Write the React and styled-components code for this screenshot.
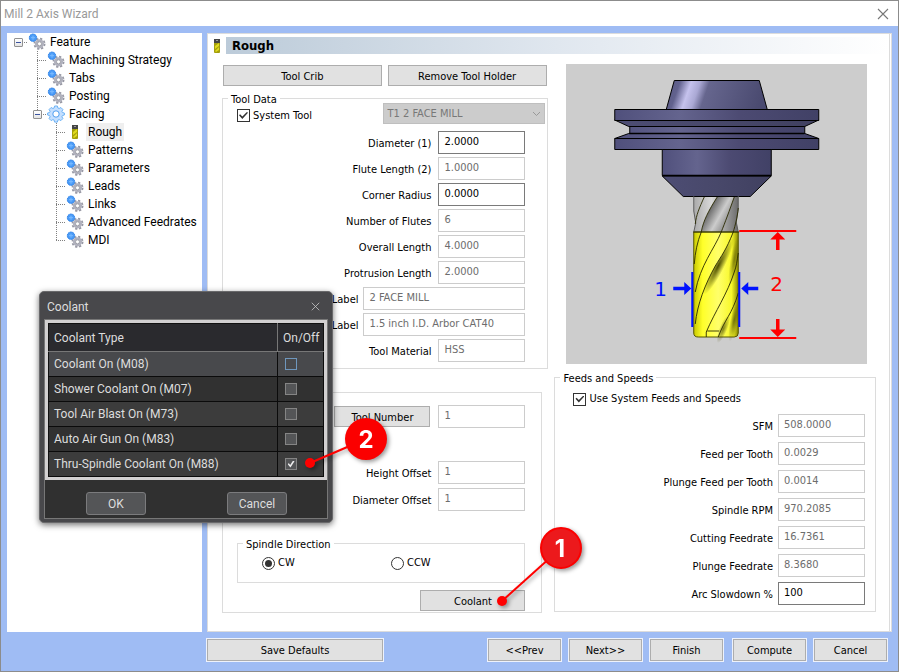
import React, { useState } from 'react';
import styled, { createGlobalStyle, css } from 'styled-components';

const uiFont = "'DejaVu Sans Condensed', 'DejaVu Sans', Tahoma, sans-serif";
const treeFont = "Roboto, 'Segoe UI', sans-serif";

const GlobalStyle = createGlobalStyle`
  * {
    box-sizing: border-box;
  }

  body {
    margin: 0;
    background: #9fbcf4;
    color: #000;
    font: 11px/14px ${uiFont};
  }

  button,
  input,
  select {
    font: inherit;
    color: inherit;
    margin: 0;
  }
`;

const Window = styled.div`
  position: relative;
  display: flex;
  flex-direction: column;
  min-height: 100vh;
  border: 1px solid #8c8c8c;
  background: #9fbcf4;
`;

const TitleBar = styled.header`
  display: flex;
  align-items: center;
  justify-content: space-between;
  height: 25px;
  padding: 0 9px 0 3px;
  background: #fff;
`;

const Title = styled.h1`
  margin: 0;
  color: #999;
  font: 400 12px/18px ${treeFont};
`;

const CloseButton = styled.button`
  display: flex;
  padding: 0;
  border: 0;
  background: none;
  color: ${({ $light }) => ($light ? '#c4c4c4' : '#777')};
`;

const Body = styled.div`
  display: flex;
  flex: 1;
  gap: 5px;
  padding: 7px 6px 0;
`;

const TreePanel = styled.nav`
  flex: 0 0 195px;
  padding-left: 2px;
  background: #fff;
`;

const TreeRow = styled.div`
  display: flex;
  align-items: center;
  height: 18px;
`;

const dots = (dir) =>
  `repeating-linear-gradient(${dir}, #808080 0 1px, transparent 1px 2px)`;

const Guide = styled.span`
  display: flex;
  align-items: center;
  justify-content: center;
  width: 19px;
  height: 18px;
  background-repeat: no-repeat;
  ${({ $kind }) =>
    $kind === 'root' &&
    css`
      background-image: ${dots('to right')};
      background-size: 10px 1px;
      background-position: 9px 9px;
    `}
  ${({ $kind }) =>
    ($kind === 'branch' || $kind === 'last') &&
    css`
      background-image: ${dots('to right')}, ${dots('to bottom')};
      background-size: 10px 1px, 1px ${$kind === 'last' ? '10px' : '100%'};
      background-position: 9px 9px, 9px 0;
    `}
`;

const Expander = styled.button`
  display: flex;
  align-items: center;
  justify-content: center;
  width: 9px;
  height: 9px;
  padding: 0;
  border: 1px solid #919191;
  border-radius: 1px;
  background: linear-gradient(#fff, #e4e4e4);

  &::after {
    content: '';
    width: 5px;
    height: 1px;
    background: #3b54a0;
  }
`;

const TreeIcon = styled.span`
  display: flex;
  width: 20px;
  height: 18px;
`;

const TreeLabel = styled.button`
  height: 18px;
  padding: 0 2px;
  border: 0;
  background: ${({ $selected }) => ($selected ? '#efefef' : 'none')};
  font: 12px/18px ${treeFont};
  white-space: nowrap;
`;

const Panel = styled.main`
  flex: 1;
  min-width: 0;
  padding: 3px 0 18px 3px;
  border: 1px solid #dcdcdc;
  border-right: 3px double #dcdcdc;
  background: #fff;
`;

const PanelHeader = styled.div`
  display: flex;
  align-items: center;
  height: 17px;
`;

const HeaderIcon = styled.span`
  display: flex;
  justify-content: flex-end;
  width: 15px;

  svg {
    flex: none;
  }
`;

const PanelTitle = styled.h2`
  flex: 1;
  margin: 0;
  padding-left: 6px;
  background: linear-gradient(to right, #bccbd9, #e0e7ef 50%, #fff);
  font: 700 13px/17px ${uiFont};
`;

const Columns = styled.div`
  display: grid;
  grid-template-columns: minmax(0, 327fr) minmax(0, 322fr);
  gap: 6px;
  padding: 11px 13px 0 11px;
`;

const Column = styled.div`
  display: flex;
  flex-direction: column;
`;

const PushButton = styled.button`
  height: 21px;
  padding: 2px 4px 0;
  border: 1px solid #adadad;
  background: #e1e1e1;
  line-height: 17px;
  white-space: nowrap;
`;

const TopButtons = styled.div`
  display: flex;
  gap: 6px;
  padding: 0 2px 0 1px;

  ${PushButton} {
    flex: 1;
  }
`;

const Group = styled.fieldset`
  min-width: 0;
  margin: 0;
  padding: 0;
  border: 1px solid #dcdcdc;
`;

const Legend = styled.legend`
  height: 10px;
  margin-left: 5px;
  padding: 0 3px;
  line-height: 13px;
`;

const ToolDataGroup = styled(Group)`
  margin-top: 7px;
  padding-bottom: 6px;
`;

const CheckLabel = styled.label`
  display: flex;
  align-items: center;
  gap: 3px;
`;

const ToolRow = styled.div`
  display: flex;
  align-items: center;
  justify-content: space-between;
  padding: 0 2px 0 14px;

  ${CheckLabel} {
    padding-top: 4px;
  }
`;

const CheckBox = styled.input.attrs({ type: 'checkbox' })`
  appearance: none;
  display: grid;
  place-items: center;
  width: 13px;
  height: 13px;
  border: 1px solid #333;
  background: #fff;

  &:checked::after {
    content: '';
    width: 9px;
    height: 7px;
    background: #333;
    clip-path: polygon(0 45%, 12% 32%, 37% 65%, 88% 0, 100% 12%, 37% 100%);
  }
`;

const SelectWrap = styled.span`
  display: grid;
  flex: 0 0 162px;
  align-items: center;

  > * {
    grid-area: 1 / 1;
  }

  svg {
    justify-self: end;
    margin-right: 4px;
    pointer-events: none;
  }
`;

const Select = styled.select`
  appearance: none;
  width: 100%;
  height: 21px;
  padding: 1px 3px 0;
  border: 1px solid #bfbfbf;
  border-radius: 0;
  background: #ccc;
  color: #787878;
  opacity: 1;
`;

const Fields = styled.div`
  display: flex;
  flex-direction: column;
  gap: ${({ $gap }) => $gap}px;
`;

const ToolFields = styled(Fields)`
  padding: 7px 22px 0 14px;
`;

const FieldRow = styled.div`
  display: grid;
  grid-template-columns: minmax(0, 1fr) ${({ $wide }) => ($wide ? 162 : 87)}px;
  gap: ${({ $wide }) => ($wide ? 5 : 7)}px;
  align-items: center;
`;

const FieldLabel = styled.label`
  padding-top: 2px;
  text-align: right;
  white-space: nowrap;
`;

const TextBox = styled.input`
  width: 100%;
  height: 23px;
  padding: 0 5px 3px;
  border: 1px solid #7a7a7a;
  border-radius: 0;
  background: #fff;

  &:disabled {
    border-color: #ccc;
    color: #6d6d6d;
  }
`;

const OffsetGroup = styled(Group)`
  display: flex;
  flex-direction: column;
  margin: 23px 6px 0 0;
  padding: 12px 16px 1px 14px;
`;

const NumberRow = styled.div`
  display: flex;
  align-items: center;
  justify-content: flex-end;
  gap: 8px;
  margin-bottom: 33px;

  ${PushButton} {
    flex: 0 0 96px;
  }

  ${TextBox} {
    flex: 0 0 87px;
  }
`;

const SpindleGroup = styled(Group)`
  margin-top: 27px;
`;

const RadioRow = styled.div`
  display: grid;
  grid-template-columns: 129px 1fr;
  padding: 8px 0 12px 24px;
`;

const Radio = styled.input.attrs({ type: 'radio' })`
  appearance: none;
  display: grid;
  place-items: center;
  width: 13px;
  height: 13px;
  border: 1px solid #333;
  border-radius: 50%;

  &:checked::after {
    content: '';
    width: 7px;
    height: 7px;
    border-radius: 50%;
    background: #333;
  }
`;

const CoolantAnchor = styled.div`
  position: relative;
  align-self: flex-end;
  margin-top: 7px;

  ${PushButton} {
    width: 105px;
  }
`;

const Callout = styled.svg`
  position: absolute;
  z-index: 3;
  left: ${({ $left }) => $left}px;
  top: ${({ $top }) => $top}px;
  overflow: visible;
  pointer-events: none;
  filter: drop-shadow(2px 2px 2px rgba(0, 0, 0, 0.4));

  text {
    fill: #fff;
    font: 700 24px Inter, sans-serif;
    text-anchor: middle;
  }
`;

const Preview = styled.div`
  margin: -1px 9px 8px 12px;
  background: #cdcdcd;

  svg {
    display: block;
    width: 100%;
    max-height: 300px;
  }

  text {
    font: 20px 'DejaVu Sans', sans-serif;
  }
`;

const FeedsGroup = styled(Group)`
  padding-bottom: 6px;

  > ${CheckLabel} {
    padding: 10px 0 8px 18px;
  }
`;

const FeedFields = styled(Fields)`
  padding: 0 10px 0 14px;

  ${FieldRow} {
    gap: 5px;
  }
`;

const Footer = styled.footer`
  display: flex;
  justify-content: space-between;
  padding: 7px 11px 10px 206px;

  ${PushButton} {
    width: 73px;
    height: 22px;
    padding-top: 0;
    box-shadow: 0 0 0 1px #eef2fb;
  }

  > ${PushButton} {
    width: 176px;
  }
`;

const FooterGroup = styled.div`
  display: flex;
  gap: 8px;
`;

const FooterActions = styled(FooterGroup)`
  gap: 10px;
`;

const Dialog = styled.section`
  position: absolute;
  z-index: 2;
  left: 38px;
  top: 290px;
  width: 294px;
  padding: 0 4px 3px;
  border: 1px solid #69696b;
  border-radius: 5px;
  background: #48484b;
  color: #ddd;
  font: 12px/16px ${treeFont};
  box-shadow: 0 2px 6px rgba(0, 0, 0, 0.55);
`;

const DialogTitle = styled.div`
  display: flex;
  align-items: center;
  justify-content: space-between;
  height: 27px;
  padding: 2px 8px 0 3px;
`;

const DialogBody = styled.div`
  border: 1px solid #777;
  background: #303030;
`;

const TableFrame = styled.div`
  border: 3px solid #d2d0d1;
  background: #303030;
`;

const CoolantTable = styled.table`
  width: 100%;
  border-collapse: collapse;
  table-layout: fixed;
  border: 1px solid #111;

  th {
    height: 28px;
    padding: 0 0 0 5px;
    border-right: 1px solid #777;
    border-bottom: 1px solid #777;
    background: #2a2a2e;
    font-weight: 400;
    text-align: left;
  }

  th:last-child {
    width: 46px;
    border-right: 0;
  }

  td {
    height: 25px;
    padding: 0 5px;
    border: 1px solid #0b0b0b;
    border-width: 0 1px 1px 0;
  }
`;

const CoolantRow = styled.tr`
  background: ${({ $active, $odd }) =>
    $active ? '#48494c' : $odd ? '#313131' : '#3c3c3c'};
`;

const DarkCheck = styled(CheckBox)`
  width: 12px;
  height: 12px;
  margin-left: 2px;
  border-color: ${({ $active }) => ($active ? '#6f97bd' : '#858585')};
  background: ${({ $active }) => ($active ? '#48494c' : '#545557')};

  &:checked::after {
    width: 7px;
    height: 7px;
    background: #eee;
    clip-path: polygon(0 50%, 20% 40%, 38% 65%, 80% 0, 100% 10%, 42% 100%);
  }
`;

const DialogButtons = styled.div`
  display: flex;
  justify-content: space-between;
  padding: 12px 40px 3px 41px;

  button {
    width: 60px;
    height: 23px;
    padding: 1px 0 0;
    border: 1px solid #7b7b7d;
    border-radius: 3px;
    background: #545557;
  }
`;

const Gears = () => (
  <svg width="18" height="18" viewBox="0 0 18 18">
    <circle cx="11.500" cy="10.800" r="5.100" fill="none" stroke="#9697a3" strokeWidth="1.800" strokeDasharray="2.200 1.800" />
    <circle cx="11.500" cy="10.800" r="3.300" fill="none" stroke="#b1b2be" strokeWidth="2.600" />
    <circle cx="11.500" cy="10.800" r="2" fill="#fff" stroke="#85868f" strokeWidth="0.700" />
    <circle cx="5" cy="4.700" r="3.700" fill="#4a9bf7" stroke="#2c7fe6" strokeWidth="1" strokeDasharray="1.600 0.700" />
    <path d="M3 4.700h4M5 2.700v4" stroke="#7dbcff" />
  </svg>
);

const FacingGear = () => (
  <svg width="18" height="18" viewBox="0 0 18 18">
    <path
      d="M7.600 1h2.800l.5 2 1.200.5 1.800-1 2 2-1 1.800.5 1.200 2 .5v2l-2 .6-.5 1.200 1 1.800-2 2-1.800-1-1.200.5-.5 2H7.600l-.5-2-1.200-.5-1.800 1-2-2 1-1.800-.5-1.200-2-.6V8l2-.5.5-1.200-1-1.800 2-2 1.800 1 1.200-.5z"
      fill="#c4dfff"
      stroke="#6db3f5"
    />
    <circle cx="9" cy="9" r="3.200" fill="#fff" stroke="#4d9df0" />
  </svg>
);

const MillIcon = () => (
  <svg width="18" height="18" viewBox="0 0 18 18">
    <rect x="6" y="2" width="6" height="14" rx="1" fill="#a39e0c" />
    <rect x="6" y="2" width="6" height="4" fill="#444" />
    <path d="M7 9l4-3v3L7 12zM7 14l4-4v3l-3 2z" fill="#e0da1c" />
    <path d="M8 3h2v1H8z" fill="#999" />
  </svg>
);

const Cross = ({ size }) => (
  <svg width={size} height={size} viewBox="0 0 12 12">
    <path d="M1 1l10 10M11 1L1 11" stroke="currentColor" strokeWidth="1.100" />
  </svg>
);

const MillDrawing = () => (
  <svg viewBox="0 0 300 300" role="img" aria-label="Tool preview">
    <defs>
      <linearGradient id="steel">
        <stop offset="0" stopColor="#50507c" />
        <stop offset="0.32" stopColor="#64648e" />
        <stop offset="0.62" stopColor="#4c4a72" />
        <stop offset="1" stopColor="#414166" />
      </linearGradient>
      <linearGradient id="cone" x2="1" y2="0.1">
        <stop offset="0" stopColor="#56567f" />
        <stop offset="0.14" stopColor="#62628e" />
        <stop offset="0.25" stopColor="#c5c2ed" />
        <stop offset="0.34" stopColor="#aaa8d4" />
        <stop offset="0.43" stopColor="#66668e" />
        <stop offset="1" stopColor="#4a4a70" />
      </linearGradient>
      <linearGradient id="taper">
        <stop offset="0" stopColor="#4d4d74" />
        <stop offset="0.5" stopColor="#48486a" />
        <stop offset="1" stopColor="#404060" />
      </linearGradient>
      <linearGradient id="shank">
        <stop offset="0" stopColor="#aaa" />
        <stop offset="0.4" stopColor="#d9d9d9" />
        <stop offset="1" stopColor="#6b6b6b" />
      </linearGradient>
      <linearGradient id="flute" x2="1" y2="0.6">
        <stop offset="0.2" stopColor="#3a3a3a" />
        <stop offset="0.65" stopColor="#ccc" />
        <stop offset="1" stopColor="#777" />
      </linearGradient>
      <linearGradient id="cutter">
        <stop offset="0" stopColor="#c9c900" />
        <stop offset="0.2" stopColor="#ffff2a" />
        <stop offset="0.55" stopColor="#ffff6a" />
        <stop offset="0.85" stopColor="#f8f82a" />
        <stop offset="1" stopColor="#8a8a00" />
      </linearGradient>
      <radialGradient id="shade">
        <stop offset="0" stopColor="#4d4d00" />
        <stop offset="1" stopColor="#4d4d00" stopOpacity="0" />
      </radialGradient>
      <clipPath id="right-of-flute">
        <path d="M167 168C160 186 155 192 149 202 139 220 131 240 129 260v17h43V168z" />
      </clipPath>
    </defs>
    <g stroke="#000" strokeWidth="1">
      <path d="M108 16.500h85l8 29H100z" fill="url(#cone)" />
      <path d="M48.500 56l14 6.500h176l14-6.500z" fill="url(#taper)" />
      <path d="M62.500 69.500h176l14 5h-204z" fill="url(#steel)" />
      <path d="M48.500 45.500h204v11h-204zM63.500 62.500h175v7h-175zM48.500 74.500h204v11h-204z" fill="url(#steel)" />
      <path d="M96 85.500h109v26H96z" fill="url(#steel)" />
      <path d="M96 112h109l-21 20.500h-67z" fill="url(#taper)" />
    </g>
    <path d="M63 69.500h175M96 111.500h109" stroke="#000" strokeWidth="1.700" />
    <path d="M127.500 133h44.500v11l-2 13 2 11h-44.500l1.500-9-1.500-12z" fill="url(#shank)" />
    <path d="M151 133h17C163 147 159 158 155 168H135C137 157 142 147 151 133z" fill="url(#flute)" />
    <path d="M127.500 168H172v101q0 4-4 4h-36q-4.500 0-4.500-4z" fill="url(#cutter)" stroke="#555500" />
    <g clipPath="url(#right-of-flute)">
      <ellipse cx="152" cy="202" rx="6" ry="32" transform="rotate(27 152 202)" fill="url(#shade)" />
      <ellipse cx="168" cy="196" rx="4" ry="26" transform="rotate(10 168 196)" fill="url(#shade)" opacity="0.6" />
    </g>
    <ellipse cx="168" cy="256" rx="4" ry="22" transform="rotate(12 168 256)" fill="url(#shade)" opacity="0.7" />
    <ellipse cx="157" cy="265" rx="4" ry="15" transform="rotate(22 157 265)" fill="url(#shade)" opacity="0.7" />
    <g fill="none" stroke="#292900" strokeWidth="0.900">
      <path d="M127.500 132v15l2 12-2 9M172 132v13l-2 13 2 10" stroke="#555" />
      <path d="M138 133C133 144 130 151 129 160" />
      <path d="M151 133C142 147 137 157 135 168 131 178 129 188 128 200" />
      <path d="M168 133C163 147 159 158 155 168 148 185 134 201 129 228" />
      <path d="M172 144C171 154 169 161 167 168 160 186 155 192 149 202 139 220 131 240 129 260" />
      <path d="M172 189C171 196 170 203 168 208 161 230 149 247 140 268v5M172 229C166 250 158 256 152 273" />
      <path d="M141 267h12M127 168h46" />
    </g>
    <g stroke="#0012ff" strokeWidth="2">
      <path d="M126 208v55M173 208v55" />
      <path d="M107 224.500h12M181 224.500h11" strokeWidth="3.500" />
      <path d="M118 218v13l7-6.500zM182 218v13l-7-6.500z" fill="#0012ff" stroke="none" />
    </g>
    <g stroke="#f00" strokeWidth="2">
      <path d="M173 167h57M173 274h57" />
      <path d="M211.500 173v13M211.500 255v12" strokeWidth="3.500" />
      <path d="M204 175.500h15l-7.500-7.500zM204 265.500h15l-7.500 7.500z" fill="#f00" stroke="none" />
    </g>
    <text x="88" y="232" fill="#0012ff">1</text>
    <text x="204" y="227" fill="#f00">2</text>
  </svg>
);

const treeItems = [
  { label: 'Feature', guides: ['root'], open: true },
  { label: 'Machining Strategy', guides: ['', 'branch'] },
  { label: 'Tabs', guides: ['', 'branch'] },
  { label: 'Posting', guides: ['', 'branch'] },
  { label: 'Facing', guides: ['', 'last'], open: true, icon: FacingGear },
  { label: 'Rough', guides: ['', '', 'branch'], icon: MillIcon },
  { label: 'Patterns', guides: ['', '', 'branch'] },
  { label: 'Parameters', guides: ['', '', 'branch'] },
  { label: 'Leads', guides: ['', '', 'branch'] },
  { label: 'Links', guides: ['', '', 'branch'] },
  { label: 'Advanced Feedrates', guides: ['', '', 'branch'] },
  { label: 'MDI', guides: ['', '', 'last'] },
];

const toolFields = [
  { id: 'diameter', label: 'Diameter (1)', value: '2.0000', enabled: true },
  { id: 'flute-length', label: 'Flute Length (2)', value: '1.0000' },
  { id: 'corner', label: 'Corner Radius', value: '0.0000', enabled: true },
  { id: 'flutes', label: 'Number of Flutes', value: '6' },
  { id: 'overall', label: 'Overall Length', value: '4.0000' },
  { id: 'protrusion', label: 'Protrusion Length', value: '2.0000' },
  { id: 'tool-label', label: 'Label', value: '2 FACE MILL', wide: true },
  { id: 'holder-label', label: 'Label', value: '1.5 inch I.D. Arbor CAT40', wide: true },
  { id: 'material', label: 'Tool Material', value: 'HSS' },
];

const offsetFields = [
  { id: 'height-offset', label: 'Height Offset', value: '1' },
  { id: 'diameter-offset', label: 'Diameter Offset', value: '1' },
];

const feedFields = [
  { id: 'sfm', label: 'SFM', value: '508.0000' },
  { id: 'fpt', label: 'Feed per Tooth', value: '0.0029' },
  { id: 'plunge-fpt', label: 'Plunge Feed per Tooth', value: '0.0014' },
  { id: 'rpm', label: 'Spindle RPM', value: '970.2085' },
  { id: 'cutting', label: 'Cutting Feedrate', value: '16.7361' },
  { id: 'plunge', label: 'Plunge Feedrate', value: '8.3680' },
  { id: 'arc', label: 'Arc Slowdown %', value: '100', enabled: true },
];

const coolants = [
  'Coolant On (M08)',
  'Shower Coolant On (M07)',
  'Tool Air Blast On (M73)',
  'Auto Air Gun On (M83)',
  'Thru-Spindle Coolant On (M88)',
];

const Field = ({ id, label, value, wide, enabled }) => (
  <FieldRow $wide={wide}>
    <FieldLabel htmlFor={id}>{label}</FieldLabel>
    <TextBox id={id} defaultValue={value} disabled={!enabled} />
  </FieldRow>
);

const CoolantDialog = () => (
  <Dialog role="dialog" aria-labelledby="coolant-title">
    <DialogTitle>
      <span id="coolant-title">Coolant</span>
      <CloseButton $light aria-label="Close">
        <Cross size={9} />
      </CloseButton>
    </DialogTitle>
    <DialogBody>
      <TableFrame>
        <CoolantTable>
          <thead>
            <tr>
              <th>Coolant Type</th>
              <th>On/Off</th>
            </tr>
          </thead>
          <tbody>
            {coolants.map((name, i) => (
              <CoolantRow key={name} $active={i === 0} $odd={i % 2 === 1}>
                <td>
                  <label htmlFor={`coolant-${i}`}>{name}</label>
                </td>
                <td>
                  <DarkCheck id={`coolant-${i}`} $active={i === 0} defaultChecked={i === 4} />
                </td>
              </CoolantRow>
            ))}
          </tbody>
        </CoolantTable>
      </TableFrame>
      <DialogButtons>
        <button>OK</button>
        <button>Cancel</button>
      </DialogButtons>
    </DialogBody>
    <Callout $left={265} $top={126} width="84" height="50">
      <path d="M5 45L61 21" stroke="#f00" strokeWidth="2" />
      <circle cx="5" cy="45" r="5" fill="#f00" />
      <circle cx="61" cy="21" r="21" fill="#fb0000" />
      <text x="61" y="30">2</text>
    </Callout>
  </Dialog>
);

export const App = () => {
  const [selected, setSelected] = useState('Rough');

  return (
    <>
      <GlobalStyle />
      <Window>
        <TitleBar>
          <Title>Mill 2 Axis Wizard</Title>
          <CloseButton aria-label="Close window">
            <Cross size={12} />
          </CloseButton>
        </TitleBar>
        <Body>
          <TreePanel>
            {treeItems.map(({ label, guides, open, icon: Icon = Gears }) => (
              <TreeRow key={label}>
                {guides.map((kind, i) => (
                  <Guide key={i} $kind={kind}>
                    {open && i === guides.length - 1 && <Expander aria-label={`Collapse ${label}`} />}
                  </Guide>
                ))}
                <TreeIcon>
                  <Icon />
                </TreeIcon>
                <TreeLabel $selected={label === selected} onClick={() => setSelected(label)}>
                  {label}
                </TreeLabel>
              </TreeRow>
            ))}
          </TreePanel>
          <Panel>
            <PanelHeader>
              <HeaderIcon>
                <MillIcon />
              </HeaderIcon>
              <PanelTitle>Rough</PanelTitle>
            </PanelHeader>
            <Columns>
              <Column>
                <TopButtons>
                  <PushButton>Tool Crib</PushButton>
                  <PushButton>Remove Tool Holder</PushButton>
                </TopButtons>
                <ToolDataGroup>
                  <Legend>Tool Data</Legend>
                  <ToolRow>
                    <CheckLabel>
                      <CheckBox defaultChecked />
                      System Tool
                    </CheckLabel>
                    <SelectWrap>
                      <Select disabled aria-label="Tool">
                        <option>T1 2 FACE MILL</option>
                      </Select>
                      <svg width="9" height="6" viewBox="0 0 9 6">
                        <path d="M1 1l3.500 3.500L8 1" fill="none" stroke="#999" />
                      </svg>
                    </SelectWrap>
                  </ToolRow>
                  <ToolFields $gap={3}>
                    {toolFields.map((f) => (
                      <Field key={f.id} {...f} />
                    ))}
                  </ToolFields>
                </ToolDataGroup>
                <OffsetGroup>
                  <NumberRow>
                    <PushButton>Tool Number</PushButton>
                    <TextBox aria-label="Tool number" defaultValue="1" disabled />
                  </NumberRow>
                  <Fields $gap={4}>
                    {offsetFields.map((f) => (
                      <Field key={f.id} {...f} />
                    ))}
                  </Fields>
                  <SpindleGroup>
                    <Legend>Spindle Direction</Legend>
                    <RadioRow>
                      <CheckLabel>
                        <Radio name="spindle" defaultChecked />
                        CW
                      </CheckLabel>
                      <CheckLabel>
                        <Radio name="spindle" />
                        CCW
                      </CheckLabel>
                    </RadioRow>
                  </SpindleGroup>
                  <CoolantAnchor>
                    <PushButton>Coolant</PushButton>
                    <Callout $left={77} $top={-63} width="86" height="80">
                      <path d="M5 74L64 21" stroke="#f00" strokeWidth="2" />
                      <circle cx="5" cy="74" r="5" fill="#f00" />
                      <circle cx="64" cy="21" r="20" fill="#ec191c" stroke="#fb0000" strokeWidth="2" />
                      <text x="63" y="30">1</text>
                    </Callout>
                  </CoolantAnchor>
                </OffsetGroup>
              </Column>
              <Column>
                <Preview>
                  <MillDrawing />
                </Preview>
                <FeedsGroup>
                  <Legend>Feeds and Speeds</Legend>
                  <CheckLabel>
                    <CheckBox defaultChecked />
                    Use System Feeds and Speeds
                  </CheckLabel>
                  <FeedFields $gap={5}>
                    {feedFields.map((f) => (
                      <Field key={f.id} {...f} />
                    ))}
                  </FeedFields>
                </FeedsGroup>
              </Column>
            </Columns>
          </Panel>
        </Body>
        <Footer>
          <PushButton>Save Defaults</PushButton>
          <FooterActions>
            <FooterGroup>
              <PushButton>&lt;&lt;Prev</PushButton>
              <PushButton>Next&gt;&gt;</PushButton>
              <PushButton>Finish</PushButton>
            </FooterGroup>
            <FooterGroup>
              <PushButton>Compute</PushButton>
              <PushButton>Cancel</PushButton>
            </FooterGroup>
          </FooterActions>
        </Footer>
        <CoolantDialog />
      </Window>
    </>
  );
};

export default App;
